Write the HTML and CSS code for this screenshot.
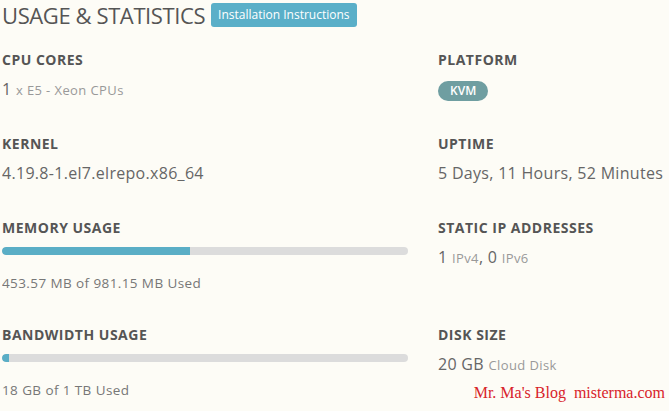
FILE: index.html
```html
<!DOCTYPE html>
<html>

<head>
    <meta charset="utf-8">
    <title>Usage &amp; Statistics</title>
    <meta name="viewport" content="width=device-width, initial-scale=1">
    <link rel="stylesheet" href="styles.css">
</head>

<body>
    <div class="header">
        <h1>USAGE &amp; STATISTICS</h1>
        <a class="btn" href="#install">Installation Instructions</a>
    </div>

    <div class="stats">
        <div class="stat">
            <div class="label">CPU CORES</div>
            <div class="value">1 <small>x E5 - Xeon CPUs</small></div>
        </div>
        <div class="stat">
            <div class="label">PLATFORM</div>
            <span class="badge">KVM</span>
        </div>

        <div class="stat">
            <div class="label">KERNEL</div>
            <div class="value">4.19.8-1.el7.elrepo.x86_64</div>
        </div>
        <div class="stat">
            <div class="label">UPTIME</div>
            <div class="value">5 Days, 11 Hours, 52 Minutes</div>
        </div>

        <div class="stat">
            <div class="label">MEMORY USAGE</div>
            <div class="bar"><div class="fill" style="width: 46.2%"></div></div>
            <div class="used">453.57 MB of 981.15 MB Used</div>
        </div>
        <div class="stat">
            <div class="label">STATIC IP ADDRESSES</div>
            <div class="value">1 <small>IPv4</small>, 0 <small>IPv6</small></div>
        </div>

        <div class="stat">
            <div class="label">BANDWIDTH USAGE</div>
            <div class="bar"><div class="fill" style="width: 1.8%"></div></div>
            <div class="used">18 GB of 1 TB Used</div>
        </div>
        <div class="stat">
            <div class="label">DISK SIZE</div>
            <div class="value">20 GB <small>Cloud Disk</small></div>
        </div>
    </div>

    <div class="watermark">Mr. Ma's Blog&nbsp; misterma.com</div>
</body>

</html>
```

FILE: styles.css
```css
body {
    font-family: 'Open Sans', 'Noto Sans', sans-serif;
    background-color: #fdfcf6;
    color: #666;
    margin: 0 0 0 2px;
    height: 411px;
    overflow: hidden;
}

.header {
    display: flex;
    align-items: center;
    gap: 6px;
    height: 30px;
    margin-bottom: 20px;
}

h1 {
    font-size: 22px;
    font-weight: 400;
    color: #555;
    margin: 0;
    letter-spacing: -0.4px;
}

.btn {
    background-color: #5aafc8;
    color: #fff;
    font-size: 12px;
    text-decoration: none;
    padding: 4px 7px;
    border-radius: 3px;
    line-height: 16px;
}

.stats {
    display: grid;
    grid-template-columns: 436px 1fr;
    grid-template-rows: 84px 84px 107px auto;
}

.label {
    font-size: 14px;
    font-weight: 700;
    color: #555;
    line-height: 20px;
    letter-spacing: 0.5px;
}

.value {
    font-size: 16px;
    line-height: 20px;
    margin-top: 9px;
    color: #666;
    letter-spacing: 0.3px;
}

.value small {
    font-size: 13px;
    color: #999;
    letter-spacing: 0.4px;
}

.badge {
    display: inline-block;
    margin-top: 11px;
    background-color: #6f9ea1;
    color: #fff;
    font-size: 12px;
    font-weight: 600;
    line-height: 20px;
    padding: 0 12px;
    border-radius: 10px;
}

.bar {
    width: 406px;
    height: 8px;
    margin-top: 9px;
    background-color: #dcdcdc;
    border-radius: 4px;
    overflow: hidden;
}

.fill {
    height: 100%;
    background-color: #5aaec6;
    border-radius: 4px 0 0 4px;
}

.used {
    font-size: 13.5px;
    line-height: 20px;
    margin-top: 18px;
    color: #777;
    letter-spacing: 0.4px;
}

.watermark {
    position: absolute;
    right: 4px;
    bottom: 9px;
    font-family: 'Liberation Serif', serif;
    font-size: 16px;
    color: #d8232a;
}
```
